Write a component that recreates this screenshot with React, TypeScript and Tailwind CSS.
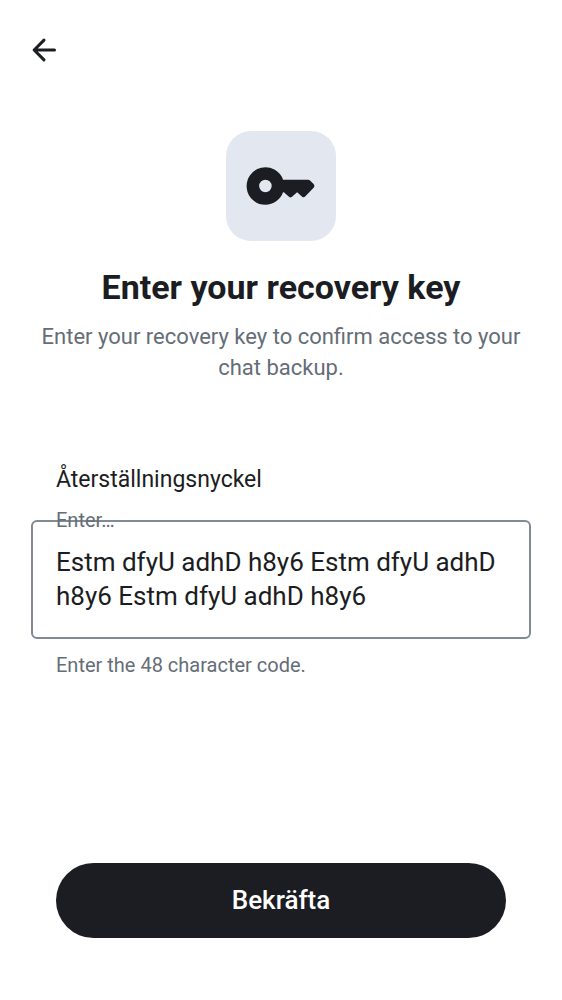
import React from "react";

export default function App() {
  return (
    <div className="flex min-h-screen flex-col bg-white px-[31px] pt-8 pb-[62px] font-['Roboto','Liberation_Sans',sans-serif] text-[#1b1d22]">
      <header className="flex">
        <button type="button" aria-label="Back" className="-ml-[5px] flex h-9 w-9 items-center justify-center">
          <svg viewBox="0 0 24 24" className="h-9 w-9" fill="currentColor" aria-hidden="true">
            <path d="m7.83 13 4.88 4.88a1 1 0 1 1-1.42 1.41l-6.58-6.58a1 1 0 0 1 0-1.42l6.58-6.58a1 1 0 1 1 1.42 1.41L7.83 11H19a1 1 0 1 1 0 2z" />
          </svg>
        </button>
      </header>
      <main className="flex flex-1 flex-col">
        <div className="mt-[63px] flex h-[110px] w-[110px] items-center justify-center self-center rounded-[25px] bg-[#e3e8f0]">
          <svg viewBox="0.15 0.15 24 24" className="h-[75px] w-[75px]" fill="currentColor" aria-hidden="true">
            <path fillRule="evenodd" d="M7 18a6 6 0 1 1 5.65-8h8.1q.3 0 .52.22l1.15 1.15q.5.58 0 1.16l-2.7 2.85q-.47.42-.97.04L17.15 14l-1.65 1.45q-.48.38-.95 0L12.9 14h-.25A6 6 0 0 1 7 18m0-4a2 2 0 1 0 0-4 2 2 0 0 0 0 4" />
          </svg>
        </div>
        <h1 className="mt-6 text-center text-[34px] leading-[44px] font-bold">Enter your recovery key</h1>
        <p className="mt-3 text-center text-[22px] leading-[31px] text-[#656d77]">
          Enter your recovery key to confirm access to your chat backup.
        </p>
        <div className="mt-[82px] flex flex-col">
          <label htmlFor="key" className="px-[25px] text-[23px] leading-[30px]">Återställningsnyckel</label>
          <div className="relative mt-[25px]">
            <span className="absolute -top-3 left-[25px] text-[20px] leading-6 text-[#656d77]">Enter…</span>
            <textarea
              id="key"
              rows={2}
              defaultValue="Estm dfyU adhD h8y6 Estm dfyU adhD h8y6 Estm dfyU adhD h8y6"
              className="block w-full resize-none overflow-hidden rounded-md border-2 border-[#818a95] bg-transparent px-[23px] pt-[23px] pb-6 text-[26px] leading-[34px] outline-none"
            />
          </div>
          <p className="mt-3 px-[25px] text-[20px] leading-7 text-[#656d77]">Enter the 48 character code.</p>
        </div>
        <button type="button" className="mx-[25px] mt-auto h-[75px] rounded-full bg-[#1b1d22] text-[26px] font-medium text-white">
          Bekräfta
        </button>
      </main>
    </div>
  );
}
